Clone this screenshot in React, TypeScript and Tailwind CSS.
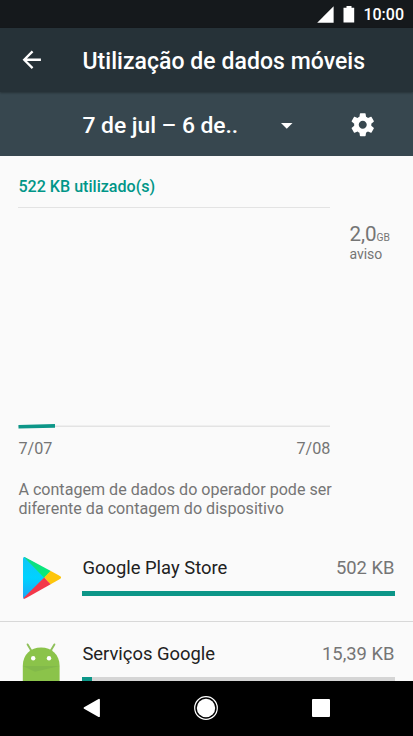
import React from "react";

interface AppUsage {
  name: string;
  amount: string;
  percent: number;
  icon: React.ReactNode;
}

const PlayStoreIcon = () => (
  <svg viewBox="0 0 40 44" className="w-10 h-11">
    <defs>
      <linearGradient id="play-blue" x1="0" y1="0" x2="0" y2="1">
        <stop offset="0" stopColor="#12c5f4" />
        <stop offset="0.5" stopColor="#00d2ff" />
        <stop offset="1" stopColor="#1fa2f5" />
      </linearGradient>
      <linearGradient id="play-green" x1="0" y1="0" x2="1" y2="1">
        <stop offset="0" stopColor="#0fd687" />
        <stop offset="1" stopColor="#06ef77" />
      </linearGradient>
      <clipPath id="play-shape">
        <path d="M1 2.8Q1 0 3.8 1.4L38 20.1Q40.2 21.5 38 22.9L3.8 42.3Q1 43.7 1 41Z" />
      </clipPath>
    </defs>
    <g clipPath="url(#play-shape)">
      <path d="M0 0H2L22.8 21.6L1.4 44H0Z" fill="url(#play-blue)" />
      <path d="M1 0L30 14L22.3 22Z" fill="url(#play-green)" />
      <path d="M29.4 14L41 21.5L29.4 29.2L22.2 21.6Z" fill="#fdc50b" />
      <path d="M22.2 21.6L29.8 29.6L1 44.5V42.6Z" fill="#f3384a" />
    </g>
  </svg>
);

const AndroidIcon = () => (
  <svg viewBox="0 0 40 44" className="w-10 h-11">
    <path d="M5.6 2.4L9.2 8.6M32.4 2.4L28.8 8.6" stroke="#8fc05a" strokeWidth="1.9" strokeLinecap="round" />
    <path d="M.8 23.8C.8 12.6 8.7 5.6 19.1 5.6S37.6 12.6 37.6 23.8V44H.8Z" fill="#8bc34a" />
    <path d="M.8 24H37.6L13 29.8Z" fill="#82b94a" />
    <circle cx="11.2" cy="16.2" r="2.2" fill="#fff" />
    <circle cx="27" cy="16.2" r="2.2" fill="#fff" />
  </svg>
);

const apps: AppUsage[] = [
  { name: "Google Play Store", amount: "502 KB", percent: 100, icon: <PlayStoreIcon /> },
  { name: "Serviços Google", amount: "15,39 KB", percent: 3.1, icon: <AndroidIcon /> },
];

const StatusBar = () => (
  <div className="h-7 shrink-0 bg-[#15191c] flex items-center justify-end pr-[9px] text-white">
    <svg viewBox="0 0 17 17" className="w-[17px] h-[17px] mr-[9px]">
      <path d="M16.6.2V16.8H.2Z" fill="#fff" />
    </svg>
    <svg viewBox="0 0 12 18" className="w-3 h-[18px] mr-2">
      <path d="M3.5 1H8.5V2.7H11.2V17.4H.5V2.7H3.5Z" fill="#fff" />
    </svg>
    <span className="text-[16px] leading-7 font-medium pt-px">10:00</span>
  </div>
);

const AppBar = () => (
  <header className="relative z-10 h-16 shrink-0 bg-[#263238] flex items-center pl-[18px] text-white shadow-[0_1px_2px_rgba(0,0,0,0.3)]">
    <svg viewBox="0 0 24 24" className="w-[27.5px] h-[27.5px] mr-[37px]">
      <path d="M20 11H7.83l5.59-5.59L12 4l-8 8 8 8 1.41-1.41L7.83 13H20v-2z" fill="#fff" />
    </svg>
    <h1 className="text-[23px] tracking-[0.04px] font-medium whitespace-nowrap pt-[4px]">Utilização de dados móveis</h1>
  </header>
);

const PeriodBar = () => (
  <div className="h-16 shrink-0 bg-[#37474f] flex items-center pl-[82.5px] text-white">
    <span className="w-[190px] text-[22.9px] tracking-[-0.05px] font-medium whitespace-nowrap pt-[4px]">7 de jul – 6 de..</span>
    <svg viewBox="0 0 24 24" className="w-[27.5px] h-[27.5px] mt-px">
      <path d="M7 10.4l5 5 5-5z" fill="#fff" />
    </svg>
    <svg viewBox="0 0 24 24" className="w-[27.5px] h-[27.5px] ml-[49px] mt-px">
      <path
        d="M19.43 12.98c.04-.32.07-.64.07-.98s-.03-.66-.07-.98l2.11-1.65c.19-.15.24-.42.12-.64l-2-3.46c-.12-.22-.39-.3-.61-.22l-2.49 1c-.52-.4-1.08-.73-1.69-.98l-.38-2.65C14.46 2.18 14.25 2 14 2h-4c-.25 0-.46.18-.49.42l-.38 2.65c-.61.25-1.17.59-1.69.98l-2.49-1c-.23-.09-.49 0-.61.22l-2 3.46c-.13.22-.07.49.12.64l2.11 1.65c-.04.32-.07.65-.07.98s.03.66.07.98l-2.11 1.65c-.19.15-.24.42-.12.64l2 3.46c.12.22.39.3.61.22l2.49-1c.52.4 1.08.73 1.69.98l.38 2.65c.03.24.24.42.49.42h4c.25 0 .46-.18.49-.42l.38-2.65c.61-.25 1.17-.59 1.69-.98l2.49 1c.23.09.49 0 .61-.22l2-3.46c.12-.22.07-.49-.12-.64l-2.11-1.65zM12 15.5c-1.93 0-3.5-1.57-3.5-3.5s1.57-3.5 3.5-3.5 3.5 1.57 3.5 3.5-1.57 3.5-3.5 3.5z"
        fill="#fff"
      />
    </svg>
  </div>
);

const UsageChart = () => (
  <section className="pl-[18.4px] pt-5">
    <p className="h-[31px] text-[16.1px] leading-[22px] font-medium text-[#009688]">522 KB utilizado(s)</p>
    <div className="flex">
      <div className="w-[312px]">
        <svg viewBox="0 0 312 224" className="block w-[312px] h-[224px]">
          <path d="M0 .5H312" stroke="#e3e3e3" />
          <path d="M0 219.3H312" stroke="#e3e3e3" strokeWidth="1.6" />
          <path d="M.5 219.8L37 218.9" stroke="#0c9688" strokeWidth="3.6" />
        </svg>
        <div className="flex justify-between text-[16.2px] leading-5 text-[#757575] pt-2">
          <span>7/07</span>
          <span>7/08</span>
        </div>
      </div>
      <div className="pl-[19px] pt-[15px] text-[#757575]">
        <div className="h-6 text-[20.6px] leading-6 whitespace-nowrap">
          2,0<span className="text-[10.3px]">GB</span>
        </div>
        <div className="text-[14px] leading-4">aviso</div>
      </div>
    </div>
  </section>
);

const AppRow: React.FC<{ app: AppUsage }> = ({ app }) => (
  <li className="h-[86px] flex border-b border-[#d8d8d8] pl-[22px] pr-[18.5px]">
    <div className="w-[60.4px] shrink-0 pt-5">{app.icon}</div>
    <div className="flex-1 pt-5">
      <div className="flex justify-between text-[18.4px] leading-6 whitespace-nowrap">
        <span className="text-[#212121]">{app.name}</span>
        <span className="text-[#757575]">{app.amount}</span>
      </div>
      <div className="mt-[11px] h-[5px] bg-[#d5d5d5]">
        <div className="h-full bg-[#0c9688]" style={{ width: `${app.percent}%` }} />
      </div>
    </div>
  </li>
);

const NavBar = () => (
  <nav className="h-[55px] shrink-0 bg-black flex items-center pl-[82px] pb-px">
    <svg viewBox="0 0 20 24" className="w-5 h-6">
      <path d="M2.5 12L17 3.8V20.2Z" fill="#fff" stroke="#fff" strokeWidth="1.8" strokeLinejoin="round" />
    </svg>
    <svg viewBox="0 0 26 26" className="w-[26px] h-[26px] ml-[91.3px]">
      <circle cx="13" cy="13" r="11.3" fill="none" stroke="#fff" strokeWidth="1.2" />
      <circle cx="13" cy="13" r="9.2" fill="#fff" />
    </svg>
    <div className="ml-[93px] w-[17.5px] h-[17.5px] rounded-[1px] bg-white" />
  </nav>
);

const App = () => {
  return (
    <div className="w-full h-[736px] flex flex-col overflow-hidden bg-[#fafafa] font-['Roboto',sans-serif]">
      <StatusBar />
      <AppBar />
      <PeriodBar />
      <main className="flex-1 min-h-0 overflow-hidden">
        <UsageChart />
        <p className="pl-[18.4px] pt-[21px] text-[16.1px] leading-[19px] text-[#757575]">
          A contagem de dados do operador pode ser
          <br />
          diferente da contagem do dispositivo
        </p>
        <ul className="pt-[18px]">
          {apps.map((app) => (
            <AppRow key={app.name} app={app} />
          ))}
        </ul>
      </main>
      <NavBar />
    </div>
  );
};

export default App;
